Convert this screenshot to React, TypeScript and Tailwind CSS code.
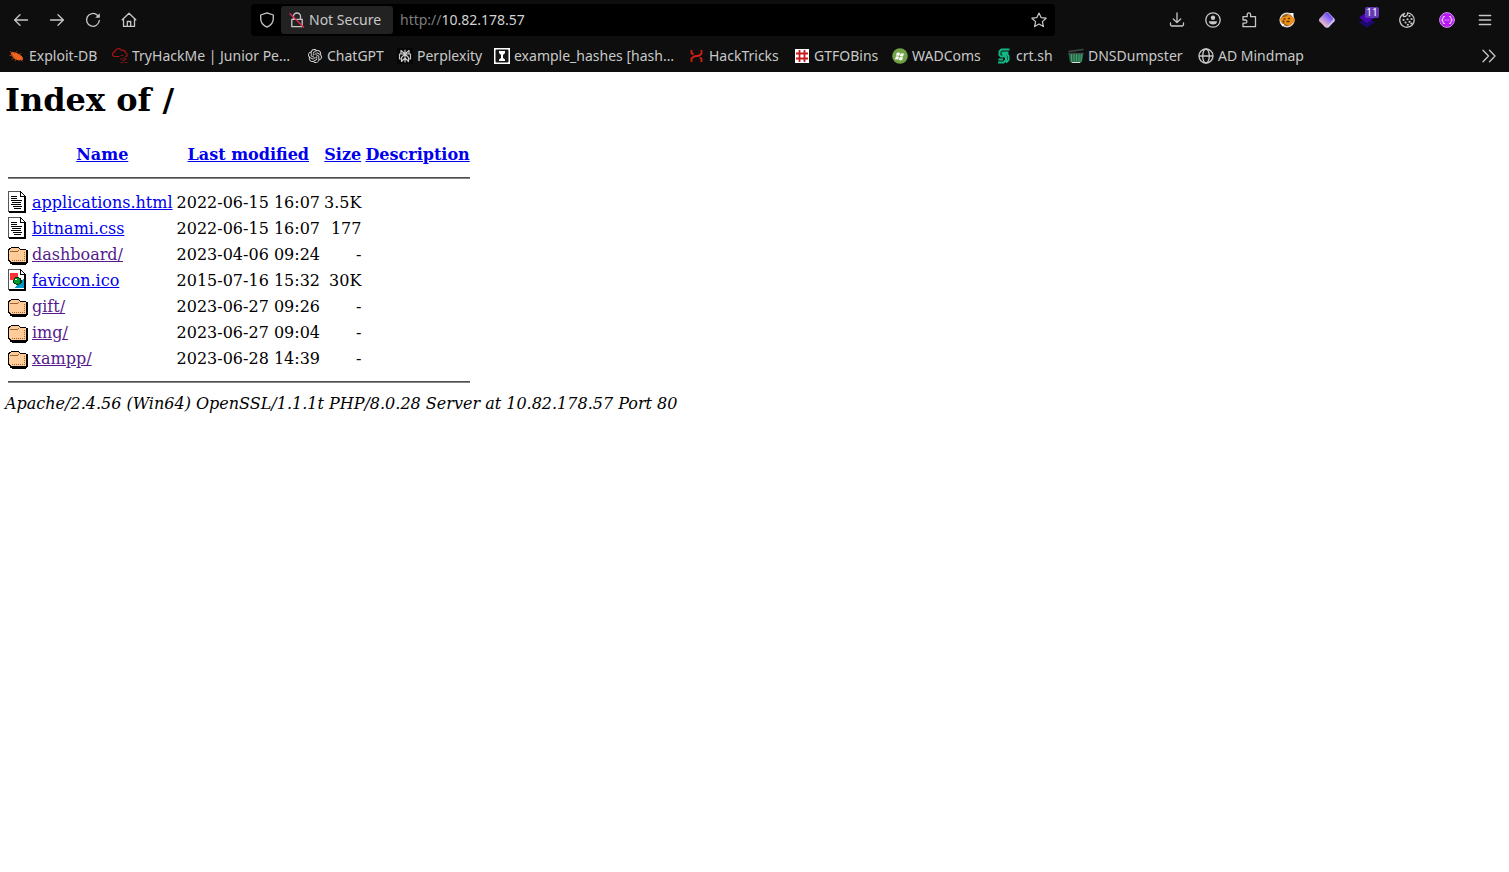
import type { ReactNode } from "react";

function Glyph({ children, className = "size-4 shrink-0" }: { children: ReactNode; className?: string }) {
  return (
    <svg viewBox="0 0 16 16" className={className} fill="none" stroke="currentColor" strokeWidth="1.3" strokeLinecap="round" strokeLinejoin="round" aria-hidden="true">
      {children}
    </svg>
  );
}

function ToolButton({ label, wide, children }: { label: string; wide?: boolean; children: ReactNode }) {
  return (
    <button type="button" aria-label={label} className={wide ? "relative flex h-8 w-10 items-center justify-center" : "relative flex h-8 w-9 items-center justify-center"}>
      {children}
    </button>
  );
}

const bookmarks: { title: string; width: string; icon: ReactNode }[] = [
  {
    title: "Exploit-DB",
    width: "w-[103px]",
    icon: (
      <Glyph>
        <path d="M2.5 4.5 6 5l4 1.5 3 2.5.5 2.5-3.500.5-4-1.2L3.500 8z" fill="#f0641e" stroke="#f0641e" strokeWidth="1" />
        <path d="M.8 7.5 4 7.8M5 10l-2 1M7 11l-1 1.8M12 12l1.5 1.2M6 5 8 3.5M10 6.5l2-1M1.2 3.2l2 1.8" stroke="#b44612" strokeWidth=".8" />
      </Glyph>
    ),
  },
  {
    title: "TryHackMe | Junior Pe…",
    width: "w-[195px]",
    icon: (
      <Glyph>
        <path d="M7 8.5H2.8a2.300 2.300 0 0 1 0-4.600A3.600 3.600 0 0 1 9.500 2.500a3 3 0 0 1 4.200 2.300 2.100 2.100 0 0 1 0 4" stroke="#a51417" strokeWidth="1.2" />
        <path d="M9 7.500h2m1 2v2m-3-1v1m1.500 1h2m1.500-2v1m-5 3h2m2 0h2" stroke="#7a1517" strokeWidth="1.2" />
      </Glyph>
    ),
  },
  {
    title: "ChatGPT",
    width: "w-[90px]",
    icon: (
      <svg viewBox="0 0 24 24" className="size-[14px] mx-px shrink-0" fill="#d6d6d6" aria-hidden="true">
        <path d="M22.282 9.821a5.985 5.985 0 0 0-.516-4.910 6.046 6.046 0 0 0-6.510-2.900A6.065 6.065 0 0 0 4.981 4.182a5.985 5.985 0 0 0-3.998 2.900 6.046 6.046 0 0 0 .743 7.097 5.980 5.980 0 0 0 .510 4.911 6.051 6.051 0 0 0 6.515 2.900A5.985 5.985 0 0 0 13.260 24a6.056 6.056 0 0 0 5.772-4.206 5.990 5.990 0 0 0 3.998-2.900 6.056 6.056 0 0 0-.747-7.073zM13.260 22.430a4.476 4.476 0 0 1-2.876-1.041l.142-.080 4.778-2.758a.795.795 0 0 0 .393-.682v-6.737l2.020 1.169a.071.071 0 0 1 .038.052v5.583a4.504 4.504 0 0 1-4.495 4.494zM3.600 18.304a4.471 4.471 0 0 1-.535-3.014l.142.085 4.783 2.759a.771.771 0 0 0 .781 0l5.843-3.369v2.332a.080.080 0 0 1-.033.062L9.740 19.950a4.499 4.499 0 0 1-6.141-1.646zM2.341 7.896a4.485 4.485 0 0 1 2.366-1.973V11.600a.766.766 0 0 0 .388.677l5.815 3.355-2.020 1.168a.076.076 0 0 1-.071 0l-4.830-2.787A4.504 4.504 0 0 1 2.341 7.872zm16.597 3.855-5.833-3.387L15.119 7.200a.076.076 0 0 1 .071 0l4.830 2.791a4.494 4.494 0 0 1-.676 8.104v-5.677a.790.790 0 0 0-.407-.667zm2.010-3.023-.141-.085-4.774-2.782a.776.776 0 0 0-.785 0L9.409 9.230V6.897a.066.066 0 0 1 .028-.061l4.830-2.787a4.499 4.499 0 0 1 6.680 4.660zm-12.640 4.135-2.020-1.164a.080.080 0 0 1-.038-.057V6.074a4.499 4.499 0 0 1 7.376-3.453l-.142.080L8.704 5.459a.795.795 0 0 0-.393.681zm1.097-2.365 2.602-1.500 2.607 1.500v2.999l-2.597 1.500-2.607-1.500z" />
      </svg>
    ),
  },
  {
    title: "Perplexity",
    width: "w-[97px]",
    icon: (
      <Glyph>
        <path d="M0 0h16v16H0z" fill="#050505" stroke="none" />
        <path d="M8 2v12M8 6 4 2.500V6H2.500v5H4.500M8 6l4-3.500V6h1.500v5h-2M8 6l-3.500 3.500v4L8 10l3.500 3.500v-4L8 6M4 6h8" stroke="#c8c8c8" strokeWidth="1.200" />
      </Glyph>
    ),
  },
  {
    title: "example_hashes [hash…",
    width: "w-[195px]",
    icon: (
      <Glyph>
        <path d="M0 0h16v16H0z" fill="#fff" stroke="none" />
        <rect x="1.500" y="1.500" width="13" height="13" rx="1" fill="#171717" stroke="none" />
        <path d="M5 3h6v2L9 7v3l2 1.500V13H5v-1.500L7 10V7L5 5z" fill="#fff" stroke="none" />
      </Glyph>
    ),
  },
  {
    title: "HackTricks",
    width: "w-[105px]",
    icon: (
      <Glyph>
        <path d="M2.500 14v-3.500l2.500-2 5.500-1 2-2V2M2.500 2v3l2 1.500M12.500 14v-3l-1.500-1.500" stroke="#d6200f" strokeWidth="1.800" strokeLinecap="butt" />
      </Glyph>
    ),
  },
  {
    title: "GTFOBins",
    width: "w-[98px]",
    icon: (
      <Glyph>
        <path d="M1 1h14v14H1z" fill="#fff" stroke="none" />
        <path d="M5.500 2v12M10.500 2v12M2 5.500h12M2 10.500h12" stroke="#c9181e" strokeWidth="1.800" strokeLinecap="butt" />
      </Glyph>
    ),
  },
  {
    title: "WADComs",
    width: "w-[104px]",
    icon: (
      <Glyph>
        <circle cx="8" cy="8" r="7.800" fill="#73a146" stroke="none" />
        <path d="M4.800 4.800q1.700-.7 3.200.1l-.8 3q-1.500-.7-3.200-.1zM8.700 5.200q1.500.7 3.300 0l-.8 3q-1.600.7-3.300 0zM3.800 8.600q1.700-.6 3.200.1l-.8 3q-1.500-.7-3.200-.1zM7.700 9q1.500.7 3.300 0l-.8 3q-1.600.7-3.300 0z" fill="#fff" stroke="none" />
      </Glyph>
    ),
  },
  {
    title: "crt.sh",
    width: "w-[72px]",
    icon: (
      <Glyph>
        <path d="M13.500 1.500H5.500L3.500 3.500V7L5 8.500h5V12l-2.500 2.500H2M12.500 4.500h-6V6l1 .5h4L12.500 8v4L10 14.500M2.500 11.500H7" stroke="#12b886" strokeWidth="2" strokeLinecap="butt" />
      </Glyph>
    ),
  },
  {
    title: "DNSDumpster",
    width: "w-[130px]",
    icon: (
      <Glyph>
        <path d="M.5 5h15L14 14H2z" fill="#256b48" stroke="none" />
        <path d="M1 3.500 15 1.500M1 5.500h14" stroke="#3d4a43" strokeWidth="1.500" />
        <path d="M3.500 6.500v6.500M6 6.500v6.500M8.500 6.500v6.500M11 6.500v6.500M13.500 6.500 13 13" stroke="#49a777" strokeWidth=".9" />
        <path d="M4 14.500h8" stroke="#d7dedb" strokeWidth="1" />
      </Glyph>
    ),
  },
  {
    title: "AD Mindmap",
    width: "w-[110px]",
    icon: (
      <Glyph>
        <circle cx="8" cy="8" r="7" />
        <ellipse cx="8" cy="8" rx="3.300" ry="7" />
        <path d="M1.300 8h13.400" />
      </Glyph>
    ),
  },
];

type Kind = "text" | "folder" | "image";

function FileIcon({ kind }: { kind: Kind }) {
  if (kind === "folder") {
    return (
      <svg viewBox="0 0 20 22" className="block h-[22px] w-5" shapeRendering="crispEdges" role="img" aria-label="[DIR]">
        <path d="M2 7h18v13h-1v1h-1v1H4v-1H2z" fill="#000" />
        <path d="M1 5h2V4h8v1h1v1h6v1h1v12h-1v1H2v-1H1v-1H0V6h1z" fill="#000" />
        <path d="M1 7h1V6h1V5h8v1h1v1h6v12H3v-1H2v-1H1z" fill="#ffcc99" />
        <path d="M2 8h8v1H2zM10 7h1v1h-1z" fill="#996633" />
        <path d="M4 17.500h13M16.500 9v9" stroke="#996633" strokeWidth="1" strokeDasharray="1 1" />
      </svg>
    );
  }
  return (
    <svg viewBox="0 0 20 22" className="block h-[22px] w-5" shapeRendering="crispEdges" role="img" aria-label={kind === "text" ? "[TXT]" : "[IMG]"}>
      <path d="M0 0h13v1h1v1h1v1h1v1h1v1h1v17H1v-1H0z" fill="#000" />
      <path d="M1 1h11v5h4v14H1z" fill="#fff" />
      <path d="M13 2h1v1h1v1h1v1h-3z" fill="#fff" />
      <path d="M0 0h12v1H0zM0 0h1v21H0z" fill="#555" />
      {kind === "text" ? (
        <path d="M3 5h6v1H3zM3 7h6v1H3zM3 9h11v1H3zM4 11h9v1H4zM3 13h10v1H3zM5 15h9v1H5zM6 17h7v1H6z" fill="#000" />
      ) : (
        <>
          <path d="M2 4h8v7H2z" fill="#ff3333" />
          <path d="M16 9v10H7z" fill="#0099cc" />
          <path d="M7 8h4v1h2v2h1v3h-1v1h-2v1H8v-1H6v-1H5v-3h1V9h1z" fill="#003300" />
          <path d="M7 9h4v1h1v4h-1v1H8v-1H6v-3h1z" fill="#009933" />
          <path d="M7 10h2v1H7z" fill="#fff" />
        </>
      )}
    </svg>
  );
}

const files: { kind: Kind; name: string; modified: string; size: string; visited?: boolean }[] = [
  { kind: "text", name: "applications.html", modified: "2022-06-15 16:07", size: "3.5K" },
  { kind: "text", name: "bitnami.css", modified: "2022-06-15 16:07", size: "177" },
  { kind: "folder", name: "dashboard/", modified: "2023-04-06 09:24", size: "-", visited: true },
  { kind: "image", name: "favicon.ico", modified: "2015-07-16 15:32", size: "30K" },
  { kind: "folder", name: "gift/", modified: "2023-06-27 09:26", size: "-", visited: true },
  { kind: "folder", name: "img/", modified: "2023-06-27 09:04", size: "-", visited: true },
  { kind: "folder", name: "xampp/", modified: "2023-06-28 14:39", size: "-", visited: true },
];

function Rule() {
  return (
    <tr>
      <td colSpan={5} className="p-px">
        <hr className="my-2 h-[2px] border-0 border-t border-b border-t-[#4d4d4d] border-b-[#858585]" />
      </td>
    </tr>
  );
}

const link = "text-[#0000ee] underline";

export default function App() {
  return (
    <div className="min-h-screen bg-white text-black">
      <header className="bg-[#0e0e0e] font-['Noto_Sans',sans-serif] text-sm text-[#c8c8c8]">
        <div className="flex h-10 items-center pr-[6px] pl-[3px]">
          <nav aria-label="Navigation" className="flex">
            <ToolButton label="Back"><Glyph><path d="M14.500 8H1.800M7 2.800 1.600 8 7 13.200" /></Glyph></ToolButton>
            <ToolButton label="Forward"><Glyph><path d="M1.500 8h12.700M9 2.800 14.400 8 9 13.200" /></Glyph></ToolButton>
            <ToolButton label="Reload">
              <Glyph>
                <path d="M14.300 8.500A6.400 6.400 0 1 1 12.400 3.300" />
                <path d="M14.800 1.200v4.600h-4.600z" fill="currentColor" stroke="none" />
              </Glyph>
            </ToolButton>
            <ToolButton label="Home"><Glyph><path d="M1.200 7.800 8 1.300l6.800 6.500M2.500 6.800v7.600h11V6.800M6.300 14.200V9.500h3.400v4.700" /></Glyph></ToolButton>
          </nav>

          <div className="mx-[104px] flex h-8 flex-1 items-center rounded bg-black">
            <button type="button" aria-label="Tracking protection" className="flex h-8 w-[30px] items-center justify-center pl-[2px]">
              <Glyph><path d="M8 .8 14.300 3v3.500c0 4-2.500 7-6.300 8.700-3.800-1.700-6.300-4.700-6.300-8.700V3z" /></Glyph>
            </button>
            <button type="button" className="flex h-7 w-28 items-center gap-1 rounded-[3px] bg-[#222222] pl-2 whitespace-nowrap">
              <Glyph>
                <path d="M4.500 7V4.500a3.500 3.500 0 0 1 7 0V7M2.800 7.300h10.400v7.400H2.800z" />
                <path d="M1 1.800 14.500 15" stroke="#e22850" strokeWidth="1.400" />
              </Glyph>
              <span>Not Secure</span>
            </button>
            <div className="flex flex-1 items-center pl-[7px]">
              <span className="text-[#7d7d7d]">http://</span>
              <input aria-label="Address" defaultValue="10.82.178.57" className="w-full flex-1 bg-transparent text-[#d2d2d2] outline-none" />
            </div>
            <button type="button" aria-label="Bookmark this page" className="flex h-8 w-8 items-center justify-center">
              <Glyph><path d="m8 1 2.100 4.600 5 .6-3.700 3.400 1 5L8 12.100l-4.400 2.500 1-5L.9 6.200l5-.6z" strokeWidth="1.200" /></Glyph>
            </button>
          </div>

          <div className="flex">
            <ToolButton label="Downloads"><Glyph><path d="M8 .8v9.700M4.300 7 8 10.600 11.700 7M1.500 11v1.500a1.500 1.500 0 0 0 1.500 1.500h10a1.500 1.500 0 0 0 1.500-1.500V11" /></Glyph></ToolButton>
            <ToolButton label="Account">
              <Glyph>
                <circle cx="8" cy="8" r="7.200" />
                <circle cx="8" cy="5.800" r="2.200" fill="currentColor" stroke="none" />
                <path d="M3.900 9.200h8.200c0 2-1.800 3.300-4.100 3.300S3.900 11.200 3.900 9.200z" fill="currentColor" stroke="none" />
              </Glyph>
            </ToolButton>
            <ToolButton label="Extensions"><Glyph><path d="M2 4.700h4.200V2.600a1.700 1.700 0 1 1 3.400 0v2.100h4.900v10H2v-3.500h2.300a1.500 1.500 0 0 0 0-3.200H2z" /></Glyph></ToolButton>
            <ToolButton label="FoxyProxy" wide>
              <Glyph>
                <circle cx="8" cy="8" r="6.800" fill="#8a5a18" stroke="#d8d8d8" strokeWidth="1.600" />
                <path d="M.8 6.500 4 5l3-.5 3-3 1 2.500 4.500 2v4l-3 1.500-2 2.500-4.500-2L2 10z" fill="#ee9018" stroke="none" />
                <path d="M10.500 1h4v4zM1.500 11l4 1.500-2 2z" fill="#fff" stroke="none" />
                <path d="M5 7h1M9.500 6.500h1M8 9.500h2M4 9l1 1" stroke="#5d370b" />
              </Glyph>
            </ToolButton>
            <ToolButton label="Wappalyzer" wide>
              <svg viewBox="0 0 16 16" className="size-4" aria-hidden="true">
                <defs>
                  <linearGradient id="gem" x1=".8" y1=".1" x2=".2" y2=".9">
                    <stop offset="0" stopColor="#5a3cf0" />
                    <stop offset=".5" stopColor="#a685ef" />
                    <stop offset="1" stopColor="#ffc6b8" />
                  </linearGradient>
                </defs>
                <path d="M8 0q1 0 1.800.8L15.500 6.800q.8 1.200 0 2.400L9.800 15.200Q8 16.500 6.200 15.200L.5 9.200Q-.2 8 .5 6.800L6.200.8Q7 0 8 0z" fill="#d4bff5" />
                <path d="M7.300.3q1.200-.2 2 .7l4.500 5q.9 1 0 2L8 14.600q-1 .8-2 0L.7 9.200Q0 8 .7 6.800z" fill="url(#gem)" />
              </svg>
            </ToolButton>
            <ToolButton label="Technologies found" wide>
              <svg viewBox="0 0 16 16" className="size-4" aria-hidden="true">
                <path d="m8 5.500 8 5-8 5.300-8-5.300z" fill="#1d0a70" />
                <path d="m8 0 8 5.500L8 11 0 5.500z" fill="#4608ad" />
              </svg>
              <span className="absolute top-[3px] right-2 h-[11px] w-[14px] rounded-[2px] bg-[#6439b8] text-center text-[10px] leading-[11px] text-white">11</span>
            </ToolButton>
            <ToolButton label="Cookie editor" wide>
              <Glyph>
                <path d="M5.500 1.300A7.200 7.200 0 1 0 15.200 8 7.200 7.200 0 0 0 8.500.8q.3 2-1 3T4.800 4.500 5.500 1.300z" />
                <path d="M10.500 4h.1M12.500 7h.1M8.500 7.200h.1M4.500 8h.1M6.500 10.500h.1M10.500 9.800h.1M8.800 12.800h.1M12.300 11.500h.1" strokeWidth="2.100" />
              </Glyph>
            </ToolButton>
            <ToolButton label="JSON viewer" wide>
              <Glyph>
                <circle cx="8" cy="8" r="7.400" fill="#b51cf0" stroke="#d58af5" strokeWidth="1" />
                <path d="M5.500 4.500q-1.500 0-1.500 1.500T2.800 8Q4 8.500 4 10t1.500 1.500M10.500 4.500Q12 4.500 12 6t1.200 2Q12 8.500 12 10t-1.500 1.500M6.200 8h.1M8 8h.1M9.800 8h.1" stroke="#f3d6fc" strokeWidth="1.100" />
              </Glyph>
            </ToolButton>
            <ToolButton label="Menu"><Glyph><path d="M2.300 3.500h11.400M2.300 8h11.400M2.300 12.500h11.400" /></Glyph></ToolButton>
          </div>
        </div>

        <nav aria-label="Bookmarks" className="flex h-8 items-center pr-3 pl-[9px]">
          {bookmarks.map((b) => (
            <a key={b.title} href="#" className={`flex shrink-0 items-center gap-1 whitespace-nowrap ${b.width}`}>
              {b.icon}
              <span>{b.title}</span>
            </a>
          ))}
          <button type="button" aria-label="More bookmarks" className="ml-auto"><Glyph><path d="m2 2.300 5.500 5.700L2 13.700M8.500 2.300 14 8l-5.500 5.700" /></Glyph></button>
        </nav>
      </header>

      <main className="px-[5px] pt-[9px] font-['DejaVu_Serif',serif] text-base leading-[19px]">
        <h1 className="mb-[21px] text-[32px] leading-[38px] font-bold">Index of /</h1>
        <table className="border-separate border-spacing-[2px]">
          <thead>
            <tr>
              <th className="p-px"><div className="h-[22px] w-5" /></th>
              <th className="p-px"><a href="#" className={link}>Name</a></th>
              <th className="p-px"><a href="#" className={link}>Last modified</a></th>
              <th className="p-px"><a href="#" className={link}>Size</a></th>
              <th className="p-px"><a href="#" className={link}>Description</a></th>
            </tr>
          </thead>
          <tbody>
            <Rule />
            {files.map((f) => (
              <tr key={f.name}>
                <td className="p-px"><FileIcon kind={f.kind} /></td>
                <td className="p-px"><a href="#" className={f.visited ? "text-[#551a8b] underline" : link}>{f.name}</a></td>
                <td className="p-px text-right whitespace-nowrap">{f.modified}</td>
                <td className="p-px text-right">{f.size}</td>
                <td className="p-px" />
              </tr>
            ))}
            <Rule />
          </tbody>
        </table>
        <address className="italic">Apache/2.4.56 (Win64) OpenSSL/1.1.1t PHP/8.0.28 Server at 10.82.178.57 Port 80</address>
      </main>
    </div>
  );
}
